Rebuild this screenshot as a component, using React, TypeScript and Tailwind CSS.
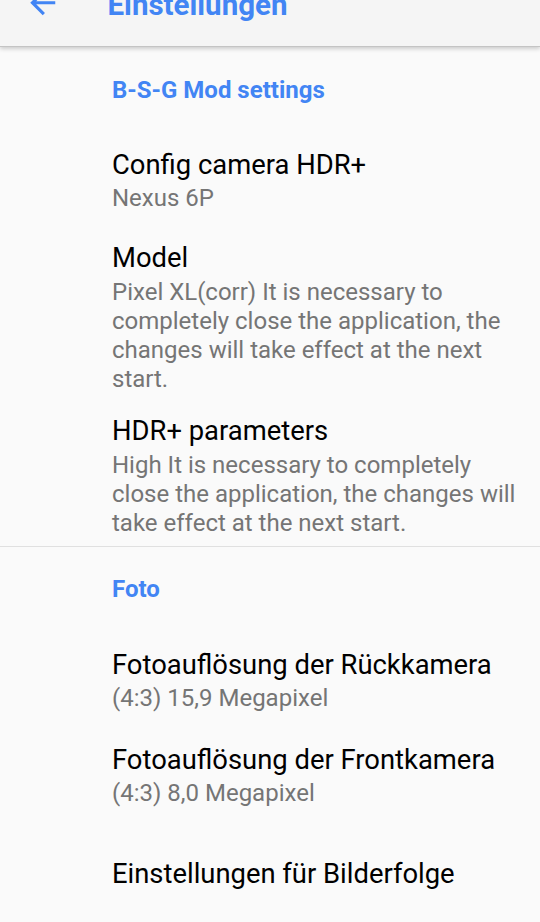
import React from "react";

const font = { fontFamily: "Roboto, 'Noto Sans', sans-serif" };

function Title({ children, className = "" }: { children: React.ReactNode; className?: string }) {
  return <div className={`text-[27.4px] leading-[32px] text-[#000000] ${className}`}>{children}</div>;
}
function Summary({ children, className = "" }: { children: React.ReactNode; className?: string }) {
  return <div className={`text-[24px] leading-[29px] text-[#757575] pr-[16px] ${className}`}>{children}</div>;
}
function Category({ children, className = "" }: { children: React.ReactNode; className?: string }) {
  return <div className={`text-[24px] leading-[28px] font-bold text-[#4285f4] ${className}`}>{children}</div>;
}

export default function App() {
  return (
    <div className="w-[540px] h-[922px] overflow-hidden bg-[#fafafa]" style={font}>
      <div className="relative z-10 h-[47px] bg-[#f5f5f5] border-b border-[#c4c4c4] shadow-[0_2px_4px_rgba(0,0,0,0.18)] overflow-hidden flex items-start">
        <svg viewBox="0 0 24 24" className="w-[37.5px] h-[37.5px] ml-[24px] mt-[-16px] shrink-0" fill="#4285f4">
          <path d="M20 11H7.83l5.59-5.59L12 4l-8 8 8 8 1.41-1.41L7.83 13H20v-2z" />
        </svg>
        <div className="ml-[46px] mt-[-12px] text-[29.5px] leading-[34px] font-bold text-[#4285f4]">Einstellungen</div>
      </div>
      <div className="pl-[112px]">
        <Category className="pt-[29px]">B-S-G Mod settings</Category>
        <Title className="mt-[45px]">Config camera HDR+</Title>
        <Summary className="mt-[3px]">Nexus 6P</Summary>
        <Title className="mt-[29px]">Model</Title>
        <Summary className="mt-[4px]">
          Pixel XL(corr) It is necessary to completely close the application, the changes will take effect at the next start.
        </Summary>
        <Title className="mt-[21px]">HDR+ parameters</Title>
        <Summary className="mt-[4px]">
          High It is necessary to completely close the application, the changes will take effect at the next start.
        </Summary>
      </div>
      <div className="mt-[8px] h-px bg-[#e0e0e0]" />
      <div className="pl-[112px]">
        <Category className="mt-[28px]">Foto</Category>
        <Title className="mt-[46px]">Fotoauflösung der Rückkamera</Title>
        <Summary className="mt-[3px]">(4:3) 15,9 Megapixel</Summary>
        <Title className="mt-[31px]">Fotoauflösung der Frontkamera</Title>
        <Summary className="mt-[3px]">(4:3) 8,0 Megapixel</Summary>
        <Title className="mt-[50px]">Einstellungen für Bilderfolge</Title>
      </div>
    </div>
  );
}
